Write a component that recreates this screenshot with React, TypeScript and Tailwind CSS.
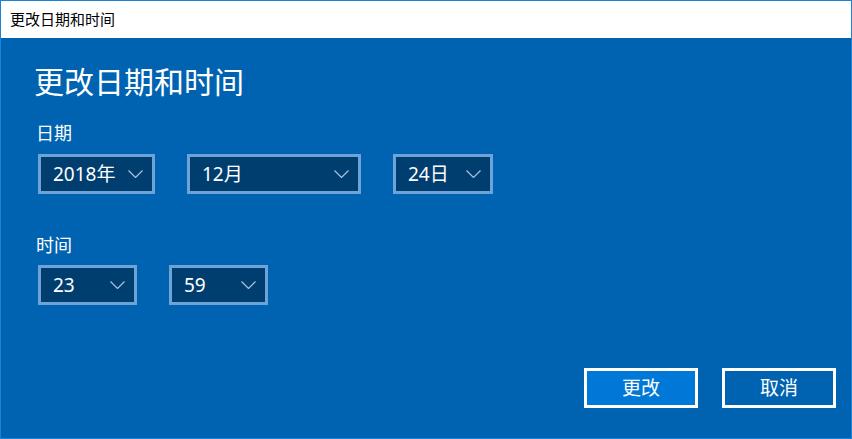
const font = "font-['Segoe_UI','Noto_Sans','Noto_Sans_CJK_SC',sans-serif]";

function Chevron() {
  return (
    <svg width="15" height="8" viewBox="0 0 15 8" className="shrink-0">
      <polyline points="0.5,0.5 7.5,7.5 14.5,0.5" fill="none" stroke="#a9c3dc" strokeWidth="1.2" />
    </svg>
  );
}

function Select({ value, width }: { value: string; width: string }) {
  return (
    <div
      className={`${width} h-[40px] border-[3px] border-[#6da3d6] bg-[#003e6f] flex items-center justify-between pl-[12px] pr-[9px] text-[19px] leading-none text-white`}
    >
      <span>{value}</span>
      <Chevron />
    </div>
  );
}

export default function App() {
  return (
    <div className={`w-[852px] h-[439px] border border-[#1883d7] flex flex-col ${font}`}>
      <div className="h-[37px] bg-white flex items-center pl-[9px] text-[15px] text-black">更改日期和时间</div>
      <div className="flex-1 bg-[#0063b1] flex flex-col pl-[37px] pr-[15px] pb-[30px] text-white">
        <h1 className="mt-[24px] h-[40px] flex items-center text-[30px] -ml-[4px] leading-none">更改日期和时间</h1>

        <div className="mt-[19px] h-[24px] flex items-center text-[18px] -ml-[2px] leading-none">日期</div>
        <div className="mt-[9px] flex">
          <Select value="2018年" width="w-[117px]" />
          <div className="w-[32px]" />
          <Select value="12月" width="w-[174px]" />
          <div className="w-[32px]" />
          <Select value="24日" width="w-[100px]" />
        </div>

        <div className="mt-[39px] h-[24px] flex items-center text-[18px] -ml-[2px] leading-none">时间</div>
        <div className="mt-[8px] flex gap-[32px]">
          <Select value="23" width="w-[99px]" />
          <Select value="59" width="w-[99px]" />
        </div>

        <div className="mt-auto flex justify-end gap-[24px]">
          <button className="w-[114px] h-[40px] border-[3px] border-white bg-[#0078d7] text-[19px] text-white leading-none">
            更改
          </button>
          <button className="w-[114px] h-[40px] border-[3px] border-white bg-[#0063b1] text-[19px] text-white leading-none">
            取消
          </button>
        </div>
      </div>
    </div>
  );
}
